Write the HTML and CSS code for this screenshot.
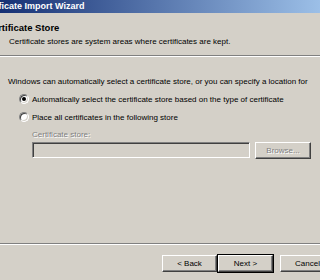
FILE: index.html
```html
<!DOCTYPE html>
<html lang="en">
<head>
  <meta charset="UTF-8" />
  <title>Certificate Import Wizard</title>
  <link rel="stylesheet" href="styles.css">
</head>
<body>
  <div class="window">
    <div class="titlebar">Certificate Import Wizard</div>

    <div class="header">
      <div class="header-title">Certificate Store</div>
      <div class="header-sub">Certificate stores are system areas where certificates are kept.</div>
    </div>
    <div class="separator"></div>

    <div class="content">
      <p class="intro">Windows can automatically select a certificate store, or you can specify a location for</p>
      <div class="radio-row">
        <span class="radio checked"></span>
        <span>Automatically select the certificate store based on the type of certificate</span>
      </div>
      <div class="radio-row">
        <span class="radio"></span>
        <span>Place all certificates in the following store</span>
      </div>
      <div class="store">
        <div class="store-label disabled">Certificate store:</div>
        <div class="store-row">
          <div class="field"></div>
          <div class="button browse disabled">Browse...</div>
        </div>
      </div>
    </div>

    <div class="separator"></div>
    <div class="buttons">
      <div class="button">&lt; Back</div>
      <div class="button default">Next &gt;</div>
      <div class="button cancel">Cancel</div>
    </div>
  </div>
</body>
</html>
```

FILE: styles.css
```css
body {
  margin: 0;
  width: 320px;
  height: 280px;
  overflow: hidden;
  background: #d4d0c8;
  font-family: "Liberation Sans", Arial, sans-serif;
  font-size: 8px;
  color: #000;
}

.window {
  width: 372px;
  height: 280px;
  margin-left: -28px;
  display: flex;
  flex-direction: column;
  background: #d4d0c8;
}

.titlebar {
  height: 13px;
  line-height: 13px;
  padding-left: 6px;
  background: linear-gradient(to right, #0a246a, #a6caf0);
  color: #fff;
  font-weight: bold;
  font-size: 9px;
}

.header {
  height: 42px;
  padding: 9px 0 0 14px;
  box-sizing: border-box;
}

.header-title {
  font-weight: bold;
  font-size: 9.5px;
  line-height: 12px;
}

.header-sub {
  line-height: 12px;
  margin-top: 2px;
  padding-left: 23px;
}

.separator {
  height: 1px;
  background: #808080;
  border-bottom: 1px solid #fff;
}

.content {
  flex: 1;
  padding: 19px 0 0 36px;
}

.intro {
  margin: 0 0 2px;
  line-height: 12px;
}

.radio-row {
  display: flex;
  align-items: center;
  height: 18px;
  padding-left: 11px;
}

.radio {
  position: relative;
  width: 8px;
  height: 8px;
  margin-right: 3px;
  border-radius: 50%;
  background: #fff;
  border: 1px solid;
  border-color: #808080 #fff #fff #808080;
  box-shadow: inset 1px 1px 0 #404040, inset -1px -1px 0 #d4d0c8;
}

.radio.checked::after {
  content: "";
  position: absolute;
  left: 2px;
  top: 2px;
  width: 4px;
  height: 4px;
  border-radius: 50%;
  background: #000;
}

.store {
  padding-left: 24px;
}

.store-label {
  line-height: 12px;
  margin-top: 3px;
}

.disabled {
  color: #808080;
  text-shadow: 1px 1px 0 #fff;
}

.store-row {
  display: flex;
  margin-top: 1px;
}

.field {
  width: 216px;
  height: 14px;
  border: 1px solid;
  border-color: #808080 #fff #fff #808080;
  box-shadow: inset 1px 1px 0 #404040, inset -1px -1px 0 #d4d0c8;
}

.button {
  width: 55px;
  height: 17px;
  box-sizing: border-box;
  display: flex;
  align-items: center;
  justify-content: center;
  border: 1px solid;
  border-color: #fff #404040 #404040 #fff;
  box-shadow: inset -1px -1px 0 #808080;
}

.browse {
  margin-left: 5px;
  width: 56px;
}

.buttons {
  display: flex;
  justify-content: flex-end;
  padding: 10px 9px 8px 0;
}

.button.default {
  outline: 1px solid #000;
  outline-offset: 0;
  margin-left: 1px;
}

.cancel {
  margin-left: 7px;
}
```
